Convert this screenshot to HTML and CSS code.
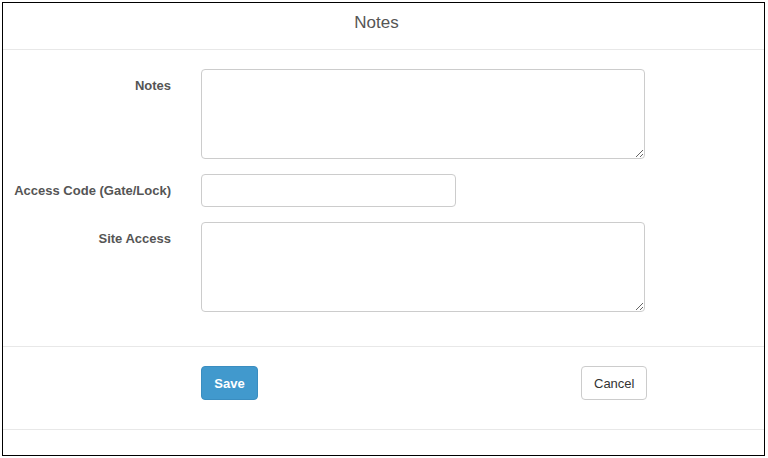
FILE: index.html
```html
<!DOCTYPE html>
<html lang="en">
<head>
    <meta charset="UTF-8">
    <meta name="viewport" content="width=device-width, initial-scale=1.0">
    <title>Notes</title>
    <link rel="stylesheet" href="styles.css">
</head>
<body>
    <div class="modal">
        <div class="modal-header">
            <h4 class="modal-title">Notes</h4>
        </div>

        <form class="modal-body">
            <div class="form-row">
                <label for="notes">Notes</label>
                <textarea id="notes" class="control wide"></textarea>
            </div>
            <div class="form-row">
                <label for="access-code">Access Code (Gate/Lock)</label>
                <input type="text" id="access-code" class="control short">
            </div>
            <div class="form-row">
                <label for="site-access">Site Access</label>
                <textarea id="site-access" class="control wide"></textarea>
            </div>
        </form>

        <div class="modal-footer">
            <div class="footer-buttons">
                <button class="btn btn-primary">Save</button>
                <button class="btn btn-default">Cancel</button>
            </div>
        </div>
    </div>
</body>
</html>
```

FILE: styles.css
```css
body {
    margin: 0;
    padding: 2px 0 0 2px;
    font-family: "Liberation Sans", Arial, sans-serif;
    color: #555;
    background-color: #fff;
}
.modal {
    width: 763px;
    height: 454px;
    box-sizing: border-box;
    border: 1px solid #000;
}
.modal-header {
    box-sizing: border-box;
    height: 47px;
    padding: 10px 14px 0 0;
    border-bottom: 1px solid #e8e8e8;
    text-align: center;
}
.modal-title {
    margin: 0;
    font-size: 17px;
    font-weight: normal;
    line-height: 20px;
    color: #555;
}
.modal-body {
    padding: 19px 0 34px 0;
    display: flex;
    flex-direction: column;
    gap: 15px;
}
.form-row {
    display: flex;
    align-items: flex-start;
}
.form-row label {
    width: 198px;
    box-sizing: border-box;
    padding: 7px 30px 0 0;
    text-align: right;
    font-size: 13px;
    font-weight: bold;
    line-height: 19px;
    color: #555;
}
.control {
    box-sizing: border-box;
    border: 1px solid #ccc;
    border-radius: 4px;
    font-family: inherit;
    font-size: 13px;
    padding: 6px 10px;
    margin: 0;
    background-color: #fff;
}
.wide {
    width: 444px;
    height: 90px;
}
.short {
    width: 255px;
    height: 33px;
}
.modal-footer {
    border-top: 1px solid #e8e8e8;
    border-bottom: 1px solid #e8e8e8;
    padding: 19px 0 29px 198px;
}
.footer-buttons {
    width: 446px;
    display: flex;
    justify-content: space-between;
}
.btn {
    height: 34px;
    box-sizing: border-box;
    padding: 0 12px;
    border-radius: 4px;
    font-family: inherit;
    font-size: 13px;
    cursor: pointer;
}
.btn-primary {
    width: 57px;
    background-color: #4199cd;
    border: 1px solid #3a8dc0;
    color: #fff;
    font-weight: bold;
}
.btn-default {
    width: 66px;
    background-color: #fff;
    border: 1px solid #ccc;
    color: #333;
}
```
